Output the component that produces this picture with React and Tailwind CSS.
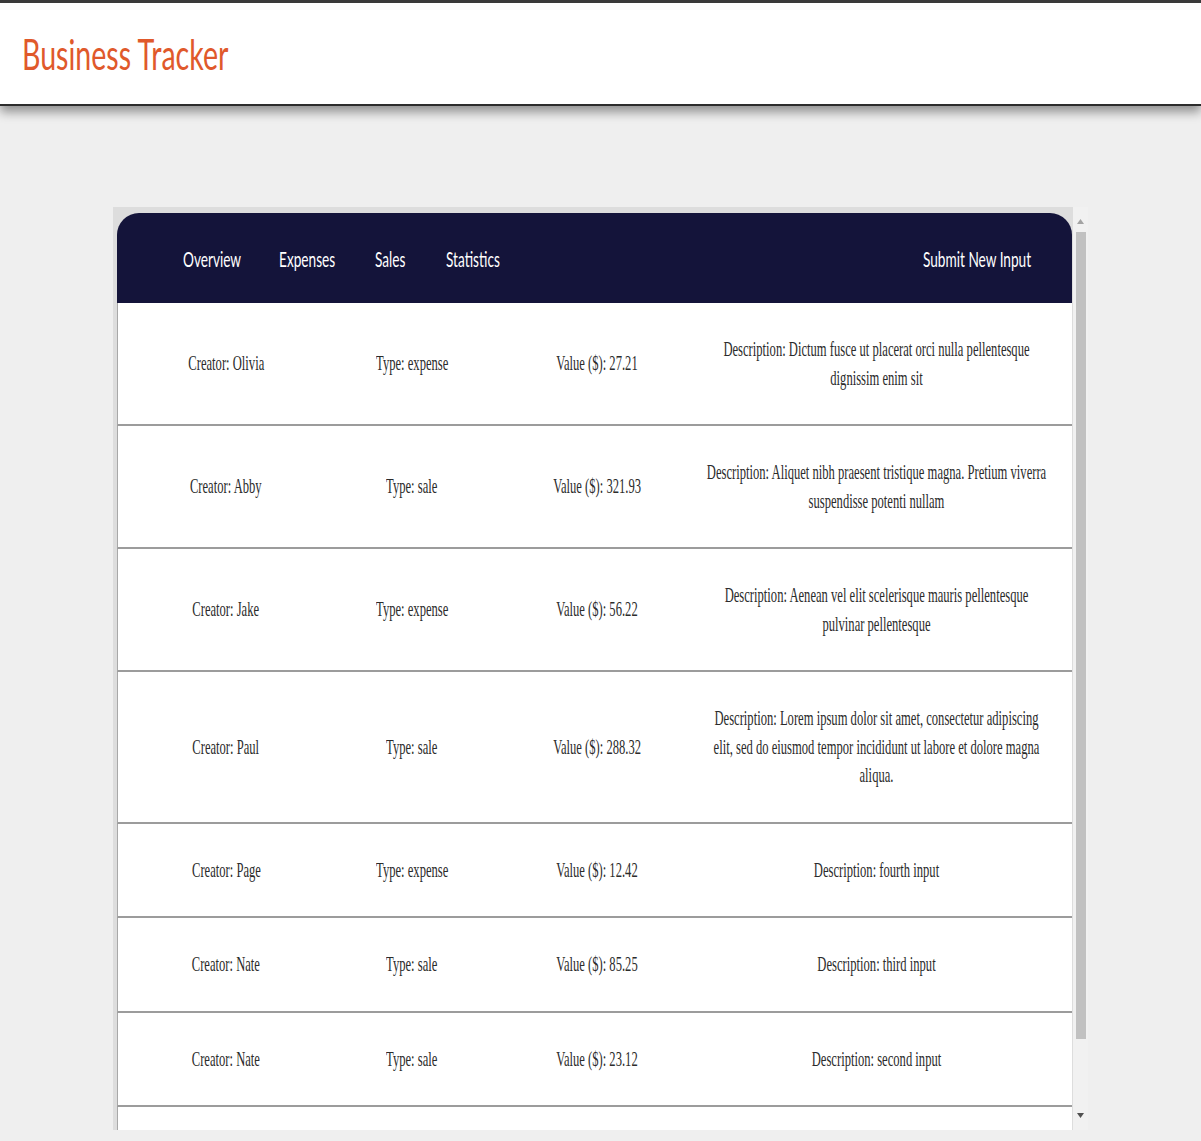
import React from "react";

const rows = [
  { c: "Olivia", t: "expense", v: "27.21", d: "Dictum fusce ut placerat orci nulla pellentesque dignissim enim sit" },
  { c: "Abby", t: "sale", v: "321.93", d: "Aliquet nibh praesent tristique magna. Pretium viverra suspendisse potenti nullam" },
  { c: "Jake", t: "expense", v: "56.22", d: "Aenean vel elit scelerisque mauris pellentesque pulvinar pellentesque" },
  { c: "Paul", t: "sale", v: "288.32", d: "Lorem ipsum dolor sit amet, consectetur adipiscing elit, sed do eiusmod tempor incididunt ut labore et dolore magna aliqua." },
  { c: "Page", t: "expense", v: "12.42", d: "fourth input" },
  { c: "Nate", t: "sale", v: "85.25", d: "third input" },
  { c: "Nate", t: "sale", v: "23.12", d: "second input" },
  { c: "Olivia", t: "expense", v: "10.50", d: "first input" },
];

function NavItem({ w, children }) {
  return (
    <div className={`${w} overflow-visible`}>
      <span className="inline-block origin-left scale-x-[0.62] whitespace-nowrap">{children}</span>
    </div>
  );
}

function Cell({ children }) {
  return (
    <div className="flex min-w-0 justify-center">
      <span className="inline-block whitespace-nowrap scale-x-[0.6]">{children}</span>
    </div>
  );
}

export default function App() {
  return (
    <div className="min-h-screen bg-[#efefef]">
      <header className="relative z-10 flex h-[106px] items-center border-t-[3px] border-b-2 border-t-[#3a3a3a] border-b-[#2c2c2c] bg-white pl-[22px] shadow-[0_6px_10px_rgba(0,0,0,0.4)]">
        <h1
          className="inline-block origin-left scale-x-[0.68] whitespace-nowrap text-[42px] font-normal leading-none text-[#e0592b]"
          style={{ fontFamily: "Lato, 'Open Sans', sans-serif" }}
        >
          Business Tracker
        </h1>
      </header>

      <div className="mx-auto mt-[101px] flex h-[923px] w-[975px]">
        <div className="h-full min-w-0 flex-1 overflow-hidden bg-[#dddddd] pt-[6px] pl-[4px] pr-[1px]">
          <nav
            className="flex h-[90px] items-center justify-between rounded-t-[22px] bg-[#14143a] pl-[66px] pr-[39px] text-[22px] text-white"
            style={{ fontFamily: "Lato, 'Open Sans', sans-serif" }}
          >
            <div className="flex gap-[38px]">
              <NavItem w="w-[58px]">Overview</NavItem>
              <NavItem w="w-[58px]">Expenses</NavItem>
              <NavItem w="w-[33px]">Sales</NavItem>
              <NavItem w="w-[57px]">Statistics</NavItem>
            </div>
            <NavItem w="w-[110px]">Submit New Input</NavItem>
          </nav>

          <div
            className="text-[21px] leading-[28.5px] text-[#2b2b2b]"
            style={{ fontFamily: "'Liberation Serif', 'Times New Roman', serif" }}
          >
            {rows.map((r, i) => (
              <div
                key={i}
                className="grid grid-cols-[216px_156px_214px_minmax(0,1fr)] items-center border-l border-b-2 border-l-[#a8a8a8] border-b-[#9c9c9c] bg-white py-[32px]"
              >
                <Cell>Creator: {r.c}</Cell>
                <Cell>Type: {r.t}</Cell>
                <Cell>Value ($): {r.v}</Cell>
                <div className="flex min-w-0 justify-center pr-[24px]">
                  <p className="w-[573px] shrink-0 text-center scale-x-[0.6]">Description: {r.d}</p>
                </div>
              </div>
            ))}
          </div>
        </div>

        <div className="flex h-full w-[15px] shrink-0 flex-col items-center bg-[#f1f1f1]">
          <div className="flex h-[25px] w-full items-end justify-center pb-[8px]">
            <svg width="7" height="5" viewBox="0 0 7 5">
              <path d="M3.5 0 L7 5 L0 5 Z" fill="#a3a3a3" />
            </svg>
          </div>
          <div className="h-[807px] w-[10px] bg-[#c1c1c1]" />
          <div className="flex w-full flex-1 items-end justify-center pb-[12px]">
            <svg width="7" height="5" viewBox="0 0 7 5">
              <path d="M0 0 L7 0 L3.5 5 Z" fill="#505050" />
            </svg>
          </div>
        </div>
      </div>
    </div>
  );
}
